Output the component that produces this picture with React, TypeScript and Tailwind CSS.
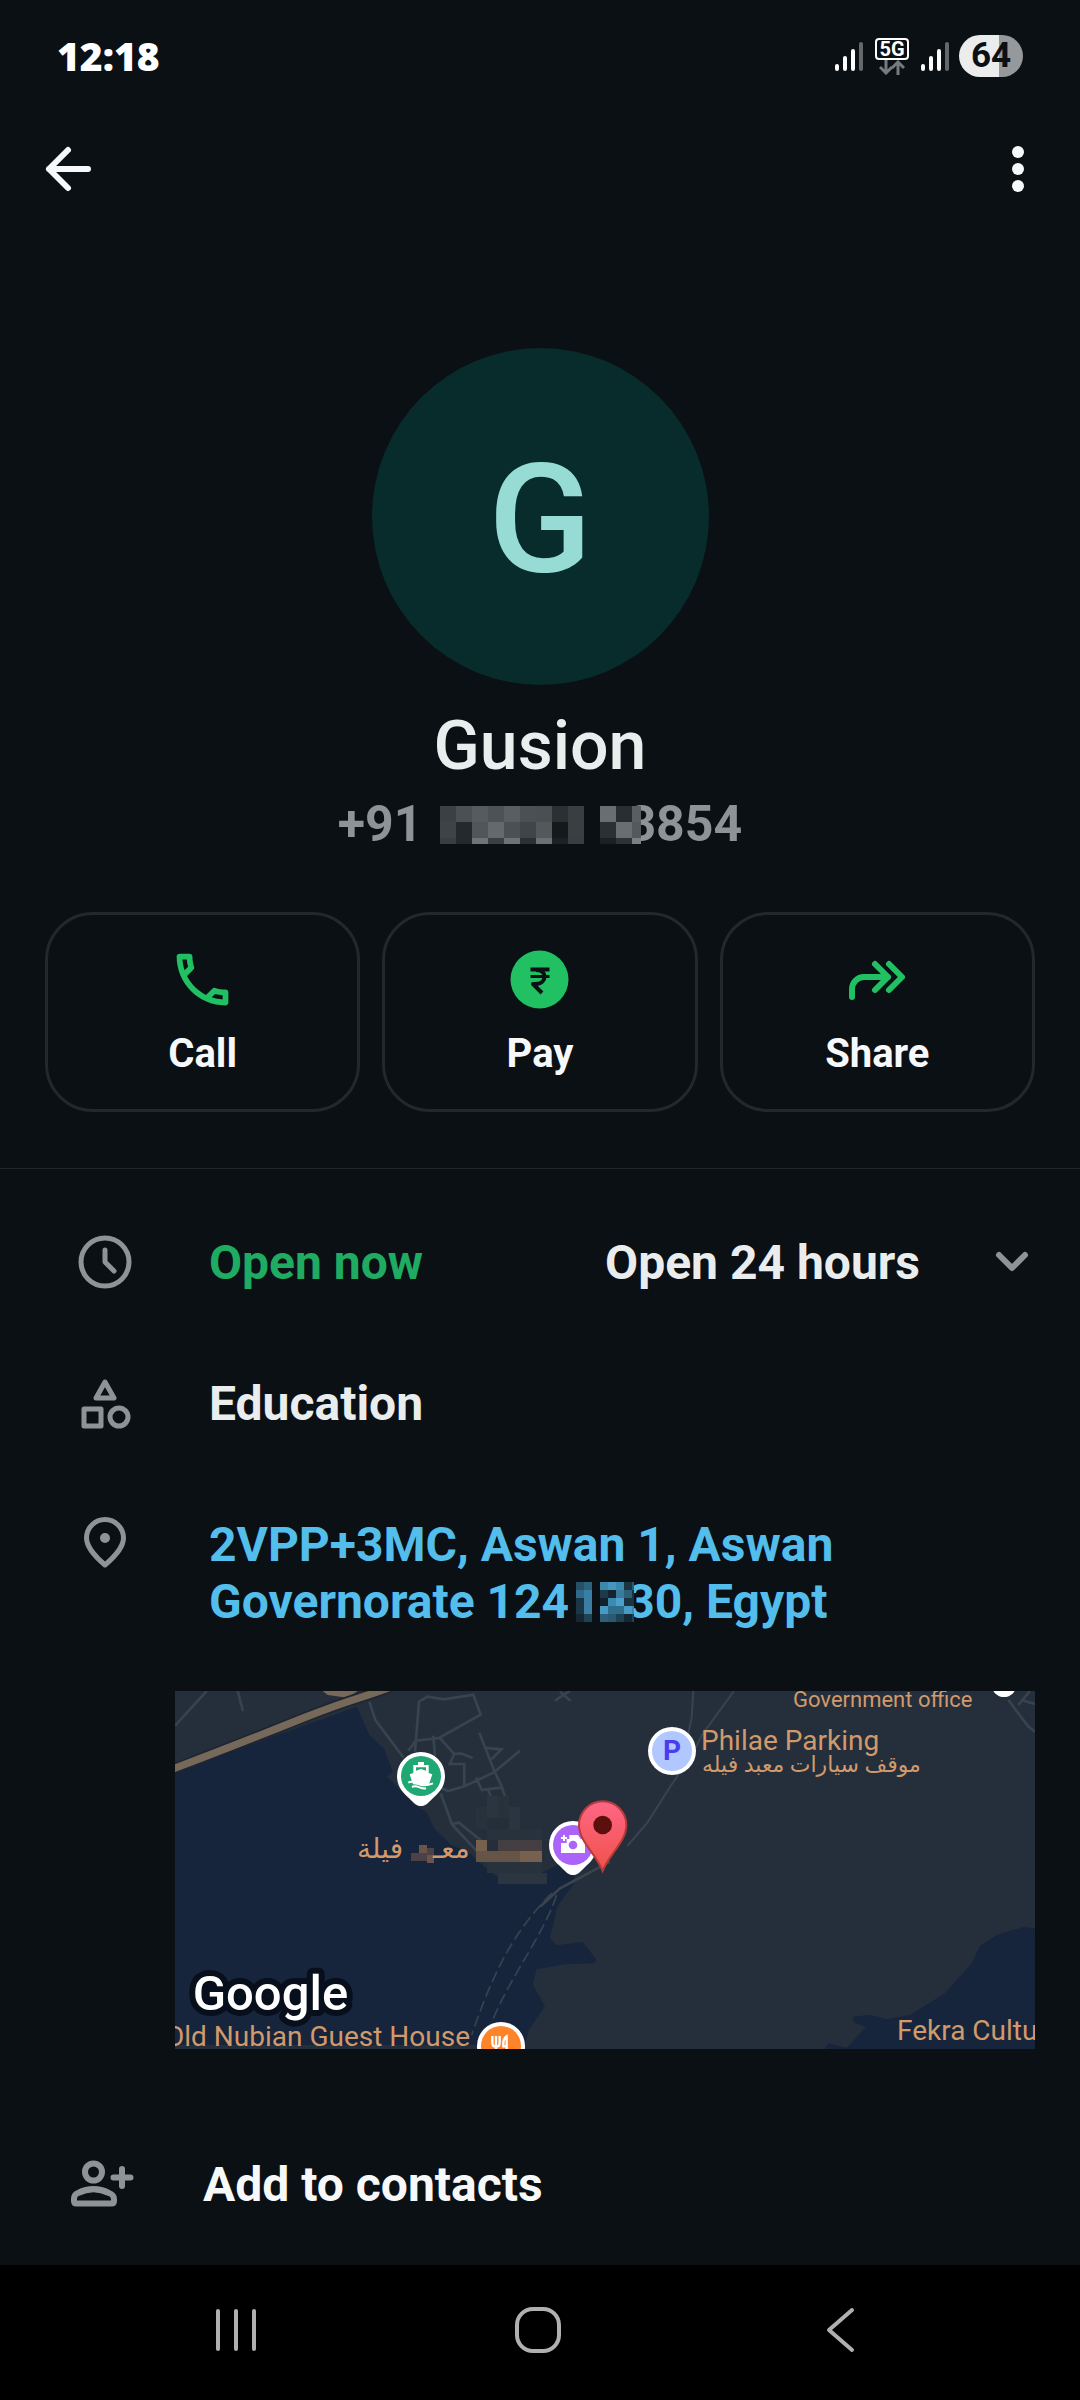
import React from 'react';

interface MosaicProps {
  cell: number;
  width: number;
  height: number;
  rows: string[][];
  className?: string;
}

// Pixelated block that hides private digits
const Mosaic: React.FC<MosaicProps> = ({ cell, width, height, rows, className }) => (
  <svg width={width} height={height} className={className} shapeRendering="crispEdges" aria-hidden="true">
    {rows.map((row, y) =>
      row.map((fill, x) => (
        <rect key={`${x}-${y}`} x={x * cell} y={y * cell} width={cell} height={cell} fill={fill} />
      ))
    )}
  </svg>
);

const phoneMosaic = [
  ['#3a4043', '#4a5053', '#555b5e', '#4c5255', '#585e61', '#4a5053', '#4a4f52', '#2b3033', '#393e41'],
  ['#3e4346', '#24292c', '#515659', '#63696c', '#4b5053', '#404548', '#53585b', '#14191c', '#3a3f42'],
  ['#393e41', '#24292c', '#6e7477', '#3a3f42', '#6c7275', '#2b3033', '#6a7073', '#1c2124', '#393e41'],
];

const phoneMosaicEnd = [
  ['#686e71', '#292e32', '#585e61'],
  ['#2b3033', '#686e71', '#54595c'],
  ['#1b2023', '#2d3235', '#7a8083'],
];

const addressMosaic = [
  ['#274f66', '#2b6280', '#0b1014', '#3c88ad', '#4697c0', '#3c88ad', '#1a3442', '#2a5a73'],
  ['#2f6a8a', '#3a7fa3', '#0b1014', '#1c3a4b', '#16242e', '#3a7a9c', '#2c607b', '#1a3442'],
  ['#1b3646', '#3a7fa3', '#0b1014', '#14212a', '#3d8ab0', '#4aa0cb', '#1a3442', '#1a3442'],
  ['#1b3646', '#3a7fa3', '#0b1014', '#479ac4', '#2f6d8c', '#2f6d8c', '#479ac4', '#3c88ad'],
  ['#152733', '#1f4254', '#0b1014', '#2c607b', '#2a5a73', '#1e4254', '#152733', '#1f4254'],
];

const SignalIcon = () => (
  <svg width="28" height="30" viewBox="0 0 28 30" strokeWidth="4" strokeLinecap="round" stroke="#fff" aria-hidden="true">
    <path d="M2 25v3M10 17v11M18 10v18" />
    <path d="M26 3v25" stroke="#64686b" />
  </svg>
);

const NetworkIcon = () => (
  <span className="flex w-[34px] flex-col items-center">
    <span className="flex h-[22px] w-[34px] items-center justify-center rounded-[4px] border-2 border-white text-[20px] leading-[20px] font-bold text-white">
      5G
    </span>
    <svg width="26" height="15" viewBox="0 0 26 15" fill="none" stroke="#777b7d" strokeWidth="3" aria-hidden="true">
      <path d="M7 0v12M1 7l6 6 6-6M19 15V3M13 8l6-6 6 6" />
    </svg>
  </span>
);

const StatusBar = () => (
  <div className="flex h-[112px] items-center justify-between px-[57px]">
    <span className="font-['Open_Sans'] text-[39px] leading-[48px] font-extrabold text-white">12:18</span>
    <div className="flex items-center">
      <SignalIcon />
      <span className="mx-[12px]"><NetworkIcon /></span>
      <SignalIcon />
      <span className="ml-[10px] flex h-[42px] w-[64px] items-center justify-center rounded-full bg-linear-to-r from-[#ebecec] from-63% to-[#96999b] to-63% text-[35px] leading-[40px] font-bold text-[#0b1014]">
        64
      </span>
    </div>
  </div>
);

const CallIcon = () => (
  <svg width="69" height="69" viewBox="0 0 24 24" fill="#21c063" aria-hidden="true">
    <path d="M6.54 5c.06.89.21 1.76.45 2.59l-1.2 1.2c-.41-1.2-.67-2.47-.76-3.79h1.51m9.86 12.02c.85.24 1.72.39 2.6.45v1.49c-1.32-.09-2.59-.35-3.8-.75l1.2-1.19M7.5 3H4c-.55 0-1 .45-1 1 0 9.39 7.61 17 17 17 .55 0 1-.45 1-1v-3.49c0-.55-.45-1-1-1-1.24 0-2.45-.2-3.57-.57-.1-.04-.21-.05-.31-.05-.26 0-.51.1-.71.29l-2.2 2.2c-2.83-1.45-5.15-3.76-6.59-6.59l2.2-2.2c.28-.28.36-.67.25-1.02C8.7 6.45 8.5 5.25 8.5 4c0-.55-.45-1-1-1z" />
  </svg>
);

const PayIcon = () => (
  <svg width="69" height="69" viewBox="0 0 69 69" fill="none" aria-hidden="true">
    <circle cx="34.5" cy="34.5" r="29" fill="#21c063" />
    <g stroke="#0b1014" strokeLinejoin="round">
      <path d="M25.5 24.5h19M31 25c6 0 8.500 3 8.500 6.500S37 39 30 39h-2l9 9" strokeWidth="4" />
      <path d="M25.5 31.500h19" strokeWidth="3" />
    </g>
  </svg>
);

const ShareIcon = () => (
  <svg width="69" height="69" viewBox="0 0 69 69" fill="none" stroke="#21c063" strokeWidth="6" strokeLinecap="round" strokeLinejoin="round" aria-hidden="true">
    <path d="M9 52V44a12 12 0 0 1 12-12h24M32 19l13 13-13 13M46 19l13 13-13 13" />
  </svg>
);

const actions = [
  { label: 'Call', icon: <CallIcon /> },
  { label: 'Pay', icon: <PayIcon /> },
  { label: 'Share', icon: <ShareIcon /> },
];

interface RowIconProps {
  children: React.ReactNode;
}

const RowIcon: React.FC<RowIconProps> = ({ children }) => (
  <span className="mr-[74px] flex h-[57px] w-[60px] shrink-0 items-center justify-center">
    <svg width="60" height="60" viewBox="0 0 60 60" fill="none" stroke="#8d9497" strokeWidth="5" strokeLinecap="round" strokeLinejoin="round" className="shrink-0" aria-hidden="true">
      {children}
    </svg>
  </span>
);

const MapDrawing = () => (
  <svg viewBox="15 33 2580 1074" preserveAspectRatio="xMinYMin slice" fill="none" className="h-full w-full" aria-hidden="true">
    <defs>
      <linearGradient id="pin" x1="0" y1="0" x2="0" y2="1">
        <stop offset="0" stopColor="#ff6685" />
        <stop offset="1" stopColor="#f0524a" />
      </linearGradient>
    </defs>
    <rect x="15" y="33" width="2580" height="1074" fill="#242f3b" />

    {/* water */}
    <path fill="#17253c" d="M15 275 560 80l38 85 45 42 25 68-18 14 42 42 38 40 40 26 22 48 52 50 50 20 50 46 35 28 135-10 40-20 56-14 4 28-4 40-47 65-23 95 20 23 78-10 42 54-7 10-90 3-83 15-12 45 37 65-47 70-15 47H15z" />
    <path fill="#17253c" d="m2595 745-35-4-80 24-50 33-25 52-80 90-105 65-70 13-50-14-52 6 2 15 37 17-57 61-55-13-10 17h630z" />

    {/* minor roads */}
    <g stroke="#37434f" strokeWidth="8">
      <path d="M15 137 110 33M203 33l16 60M598 65l18 55 84 112M735 215l12-150 25-15 50 8 88-14 22 60-125 70-70 8-22 30M790 167l5 60M808 172l45 50-14 30h44v68M853 222l20-2 35 14M815 325l20 8 50-15 85-40 80-66M928 158l45 115 20 42 12 34M942 203l52 5-30 30M918 292l17 38 62-8M955 330l8 22M812 340l35 95 75 80M847 432l20-4 80 65" />
      <path d="m1155 62 45-30M1170 35l32 28" />
      <path d="M1570 33l-5 80-12 55M1692 33l-95 130-30 60-65 95-70 110-60 70" strokeWidth="6" />
      <path d="m1320 545-150 80-60 55" stroke="#3a444f" />
      <path d="m2515 60 60 80 20 15M2545 75l35-42M2560 62l35 10" />
    </g>
    <path d="M1145 640c-120 120-180 250-240 425M1160 645c-40 120-130 230-190 370" stroke="#37434f" strokeWidth="5" strokeDasharray="34 14" />

    {/* highway */}
    <path d="M458 33l15 12 60 8 30-20z" fill="#76695a" />
    <path d="M0 270c120-45 240-92 400-156S560 60 660 22" stroke="#1f2533" strokeWidth="32" />
    <path d="M0 270c120-45 240-92 400-156S560 60 660 22" stroke="#76695a" strokeWidth="22" />

    {/* blurred area */}
    <g shapeRendering="crispEdges">
      <path fill="#27323d" d="M918 380h33v66h-33zM984 347h33v66h-33zM951 446h165v34H951zM951 546h165v34H951z" />
      <path fill="#2a3540" d="M951 347h33v66h-33zM1017 380h33v66h-33zM984 580h148v32H984z" />
      <path fill="#78604f" d="M918 480h33v33h-33zM1050 513h66v33h-66z" />
      <path fill="#463f42" d="M951 513h33v33h-33zM984 480h132v33H984z" />
      <path fill="#665447" d="M918 513h132v33H918z" />
      <path fill="#6b5449" d="M747 495h24v24h-24zM771 524h22v24h-22z" />
      <path fill="#4b4147" d="M723 519h48v24h-48zM771 505h22v19h-22z" />
    </g>

    {/* ferry */}
    <path d="M681 288a72 72 0 1 1 144 0c0 34-20 52-38 68-12 12-20 22-34 22s-22-10-34-22c-18-16-38-34-38-68z" fill="#fff" />
    <circle cx="753" cy="288" r="60" fill="#1fa874" />
    <path d="M744 246h18v9h14v24l11 4-10 30-24 2-24-2-10-30 11-4v-24h14zM738 262v10l15-5 15 5v-10z" fill="#fff" fillRule="evenodd" />
    <path d="M715 308c14-8 22 2 36 6s22 2 38-4M726 321c16-8 26 8 42 4" stroke="#fff" strokeWidth="6" />

    {/* photo spot */}
    <path d="M1137 495a72 72 0 1 1 144 0c0 34-20 52-38 68-12 12-20 22-34 22s-22-10-34-22c-18-16-38-34-38-68z" fill="#fff" />
    <circle cx="1209" cy="495" r="60" fill="#ab63fa" />
    <path d="M1173 489h17v-12h8v-12h26l8 12h13v42h-72z" fill="#fff" />
    <path d="M1182 465v18M1173 474h18" stroke="#fff" strokeWidth="6" />
    <circle cx="1209" cy="495" r="13" fill="#ab63fa" />

    {/* business location */}
    <path d="M1298 573c-20-52-71-88-71-138a71 71 0 0 1 142 0c0 50-51 86-71 138z" fill="url(#pin)" stroke="#b83a3a" strokeWidth="6" />
    <circle cx="1298" cy="435" r="28" fill="#5c100e" />

    {/* parking, restaurant, office */}
    <circle cx="1506" cy="213" r="72" fill="#fff" />
    <circle cx="1506" cy="213" r="60" fill="#b1c7ff" />
    <circle cx="993" cy="1098" r="72" fill="#fff" />
    <circle cx="993" cy="1098" r="60" fill="#ff8429" />
    <path d="M967 1068v20q0 12 11 12t11-12v-20M978 1068v39M1010 1107v-38q-12 8-10 30h10" stroke="#fff" strokeWidth="7" />
    <circle cx="2502" cy="14" r="37" fill="#fff" />

    <text x="68" y="990" fontFamily="Roboto" fontSize="147" fontWeight="500" fill="#fff" stroke="#060f1b" strokeWidth="36" strokeLinejoin="round" paintOrder="stroke">Google</text>
  </svg>
);

const LocationMap = () => (
  <a href="#map" aria-label="Open map" className="relative mt-[61px] mr-[45px] ml-[175px] block h-[358px] overflow-hidden text-[28px] leading-[32px] font-normal whitespace-nowrap text-[#d2996b]">
    <MapDrawing />
    <span className="absolute top-[-5px] left-[618px] text-[22px] leading-[28px]">Government office</span>
    <span className="absolute top-[34px] left-[526px]">Philae Parking</span>
    <span dir="rtl" className="absolute top-[60px] left-[527px] text-[22px] leading-[28px]">موقف سيارات معبد فيله</span>
    <span className="absolute top-[44px] left-[487px] w-[20px] text-center font-bold text-[#4b3bef]">P</span>
    <span dir="rtl" className="absolute top-[142px] left-[182px]">فيلة</span>
    <span dir="rtl" className="absolute top-[142px] left-[258px]">معـ</span>
    <span className="absolute top-[330px] left-[-10px]">Old Nubian Guest House</span>
    <span className="absolute top-[324px] left-[722px]">Fekra Cultural</span>
  </a>
);

export default function App() {
  return (
    <div className="flex min-h-screen flex-col bg-[#0b1014] font-[Roboto,'DejaVu_Sans',sans-serif] text-[#e9edee]">
      <StatusBar />

      <header className="flex h-[114px] items-center justify-between px-[36px]">
        <button type="button" aria-label="Back">
          <svg width="66" height="66" viewBox="0 0 66 66" fill="none" stroke="#f7f8fa" strokeWidth="6" strokeLinecap="round" strokeLinejoin="round">
            <path d="M52 33H13M32 14 13 33l19 19" />
          </svg>
        </button>
        <button type="button" aria-label="More options">
          <svg width="52" height="66" viewBox="0 0 52 66" fill="#f7f8fa">
            <circle cx="26" cy="16" r="6" />
            <circle cx="26" cy="33" r="6" />
            <circle cx="26" cy="50" r="6" />
          </svg>
        </button>
      </header>

      <main className="flex-1">
        <section className="flex flex-col items-center pt-[122px]">
          <div className="flex size-[337px] items-center justify-center rounded-full bg-[#082b2c] pt-[6px] text-[152px] font-medium text-[#96dcd4]">
            G
          </div>
          <h1 className="mt-[21px] text-[68px] leading-[80px] font-medium">Gusion</h1>
          <p className="mt-[8px] flex items-center text-[50px] leading-[61px] font-bold text-[#8d9497]">
            <span>+91</span>
            <Mosaic cell={16} width={144} height={38} rows={phoneMosaic} className="ml-[18px]" />
            <Mosaic cell={16} width={41} height={38} rows={phoneMosaicEnd} className="relative -mr-[14px] ml-[16px]" />
            <span>3854</span>
          </p>
        </section>

        <div className="mt-[57px] grid grid-cols-3 gap-[22px] px-[45px]">
          {actions.map((a) => (
            <button
              key={a.label}
              type="button"
              className="flex h-[200px] flex-col items-center gap-[17px] rounded-[48px] border-3 border-[#23282c] pt-[30px] text-[40px] leading-[46px] font-bold text-[#f7f8fa]"
            >
              {a.icon}
              {a.label}
            </button>
          ))}
        </div>

        <section className="mt-[56px] border-t border-[#20262a] pt-[65px] text-[48px] leading-[57px] font-bold">
          <div className="flex flex-col gap-[84px] pr-[40px] pl-[75px]">
            <div className="flex">
              <RowIcon>
                <circle cx="30" cy="29" r="24" />
                <path d="M30 17v12l9 9" />
              </RowIcon>
              <span className="flex-1 text-[#1fab61]">Open now</span>
              <span>Open 24 hours</span>
              <button type="button" aria-label="Show opening hours" className="ml-[64px]">
                <svg width="56" height="56" viewBox="0 0 56 56" fill="none" stroke="#8d9497" strokeWidth="6" strokeLinecap="round" strokeLinejoin="round">
                  <path d="m15 20 13 13 13-13" />
                </svg>
              </button>
            </div>
            <div className="flex">
              <RowIcon>
                <path d="m30 8 9 16H21z" />
                <rect x="9" y="35" width="17" height="17" />
                <circle cx="44" cy="43" r="9" />
              </RowIcon>
              <span>Education</span>
            </div>
            <div className="flex">
              <RowIcon>
                <path d="M30 50C24 45 11.500 33 11.500 23a18.500 18.500 0 0 1 37 0C48.500 33 36 45 30 50z" />
                <circle cx="30" cy="23" r="5" fill="#8d9497" stroke="none" />
              </RowIcon>
              <a href="#map" className="text-[#53bdeb]">
                <span className="block">2VPP+3MC, Aswan 1, Aswan</span>
                <span className="flex items-center">
                  <span>Governorate 124</span>
                  <Mosaic cell={8} width={58} height={40} rows={addressMosaic} className="relative -mr-[7px] ml-[7px]" />
                  <span>30, Egypt</span>
                </span>
              </a>
            </div>
          </div>

          <LocationMap />

          <a href="#add" className="mt-[107px] mb-[52px] flex items-center pl-[66px] text-[#f7f8fa]">
            <svg width="72" height="57" viewBox="0 1 72 57" fill="none" stroke="#8d9497" strokeWidth="6" strokeLinecap="round" strokeLinejoin="round" className="mr-[65px]" aria-hidden="true">
              <circle cx="27.500" cy="17" r="8.500" />
              <path d="M8 44c0-3 1-5 4-6 10-5 21-5 31 0 3 1 5 3 5 6v2q0 2.500-2.500 2.500h-35Q8 48.500 8 46z" />
              <path d="M56 14v17M47.500 22.500h17" />
            </svg>
            Add to contacts
          </a>
        </section>
      </main>

      <nav className="flex h-[135px] bg-black pr-[89px] pb-[5px] pl-[85px] text-[#b0b0b0]">
        <button type="button" aria-label="Recent apps" className="flex flex-1 items-center justify-center">
          <svg width="48" height="48" viewBox="0 0 48 48" stroke="currentColor" strokeWidth="4" strokeLinecap="round">
            <path d="M6 5v38M24 5v38M42 5v38" />
          </svg>
        </button>
        <button type="button" aria-label="Home" className="flex flex-1 items-center justify-center">
          <svg width="48" height="48" viewBox="0 0 48 48" fill="none" stroke="currentColor" strokeWidth="4">
            <rect x="3" y="3" width="42" height="42" rx="16" />
          </svg>
        </button>
        <button type="button" aria-label="Back" className="flex flex-1 items-center justify-center">
          <svg width="48" height="48" viewBox="0 0 48 48" fill="none" stroke="currentColor" strokeWidth="4" strokeLinecap="round" strokeLinejoin="round">
            <path d="M36 4 13 24l23 20" />
          </svg>
        </button>
      </nav>
    </div>
  );
}
